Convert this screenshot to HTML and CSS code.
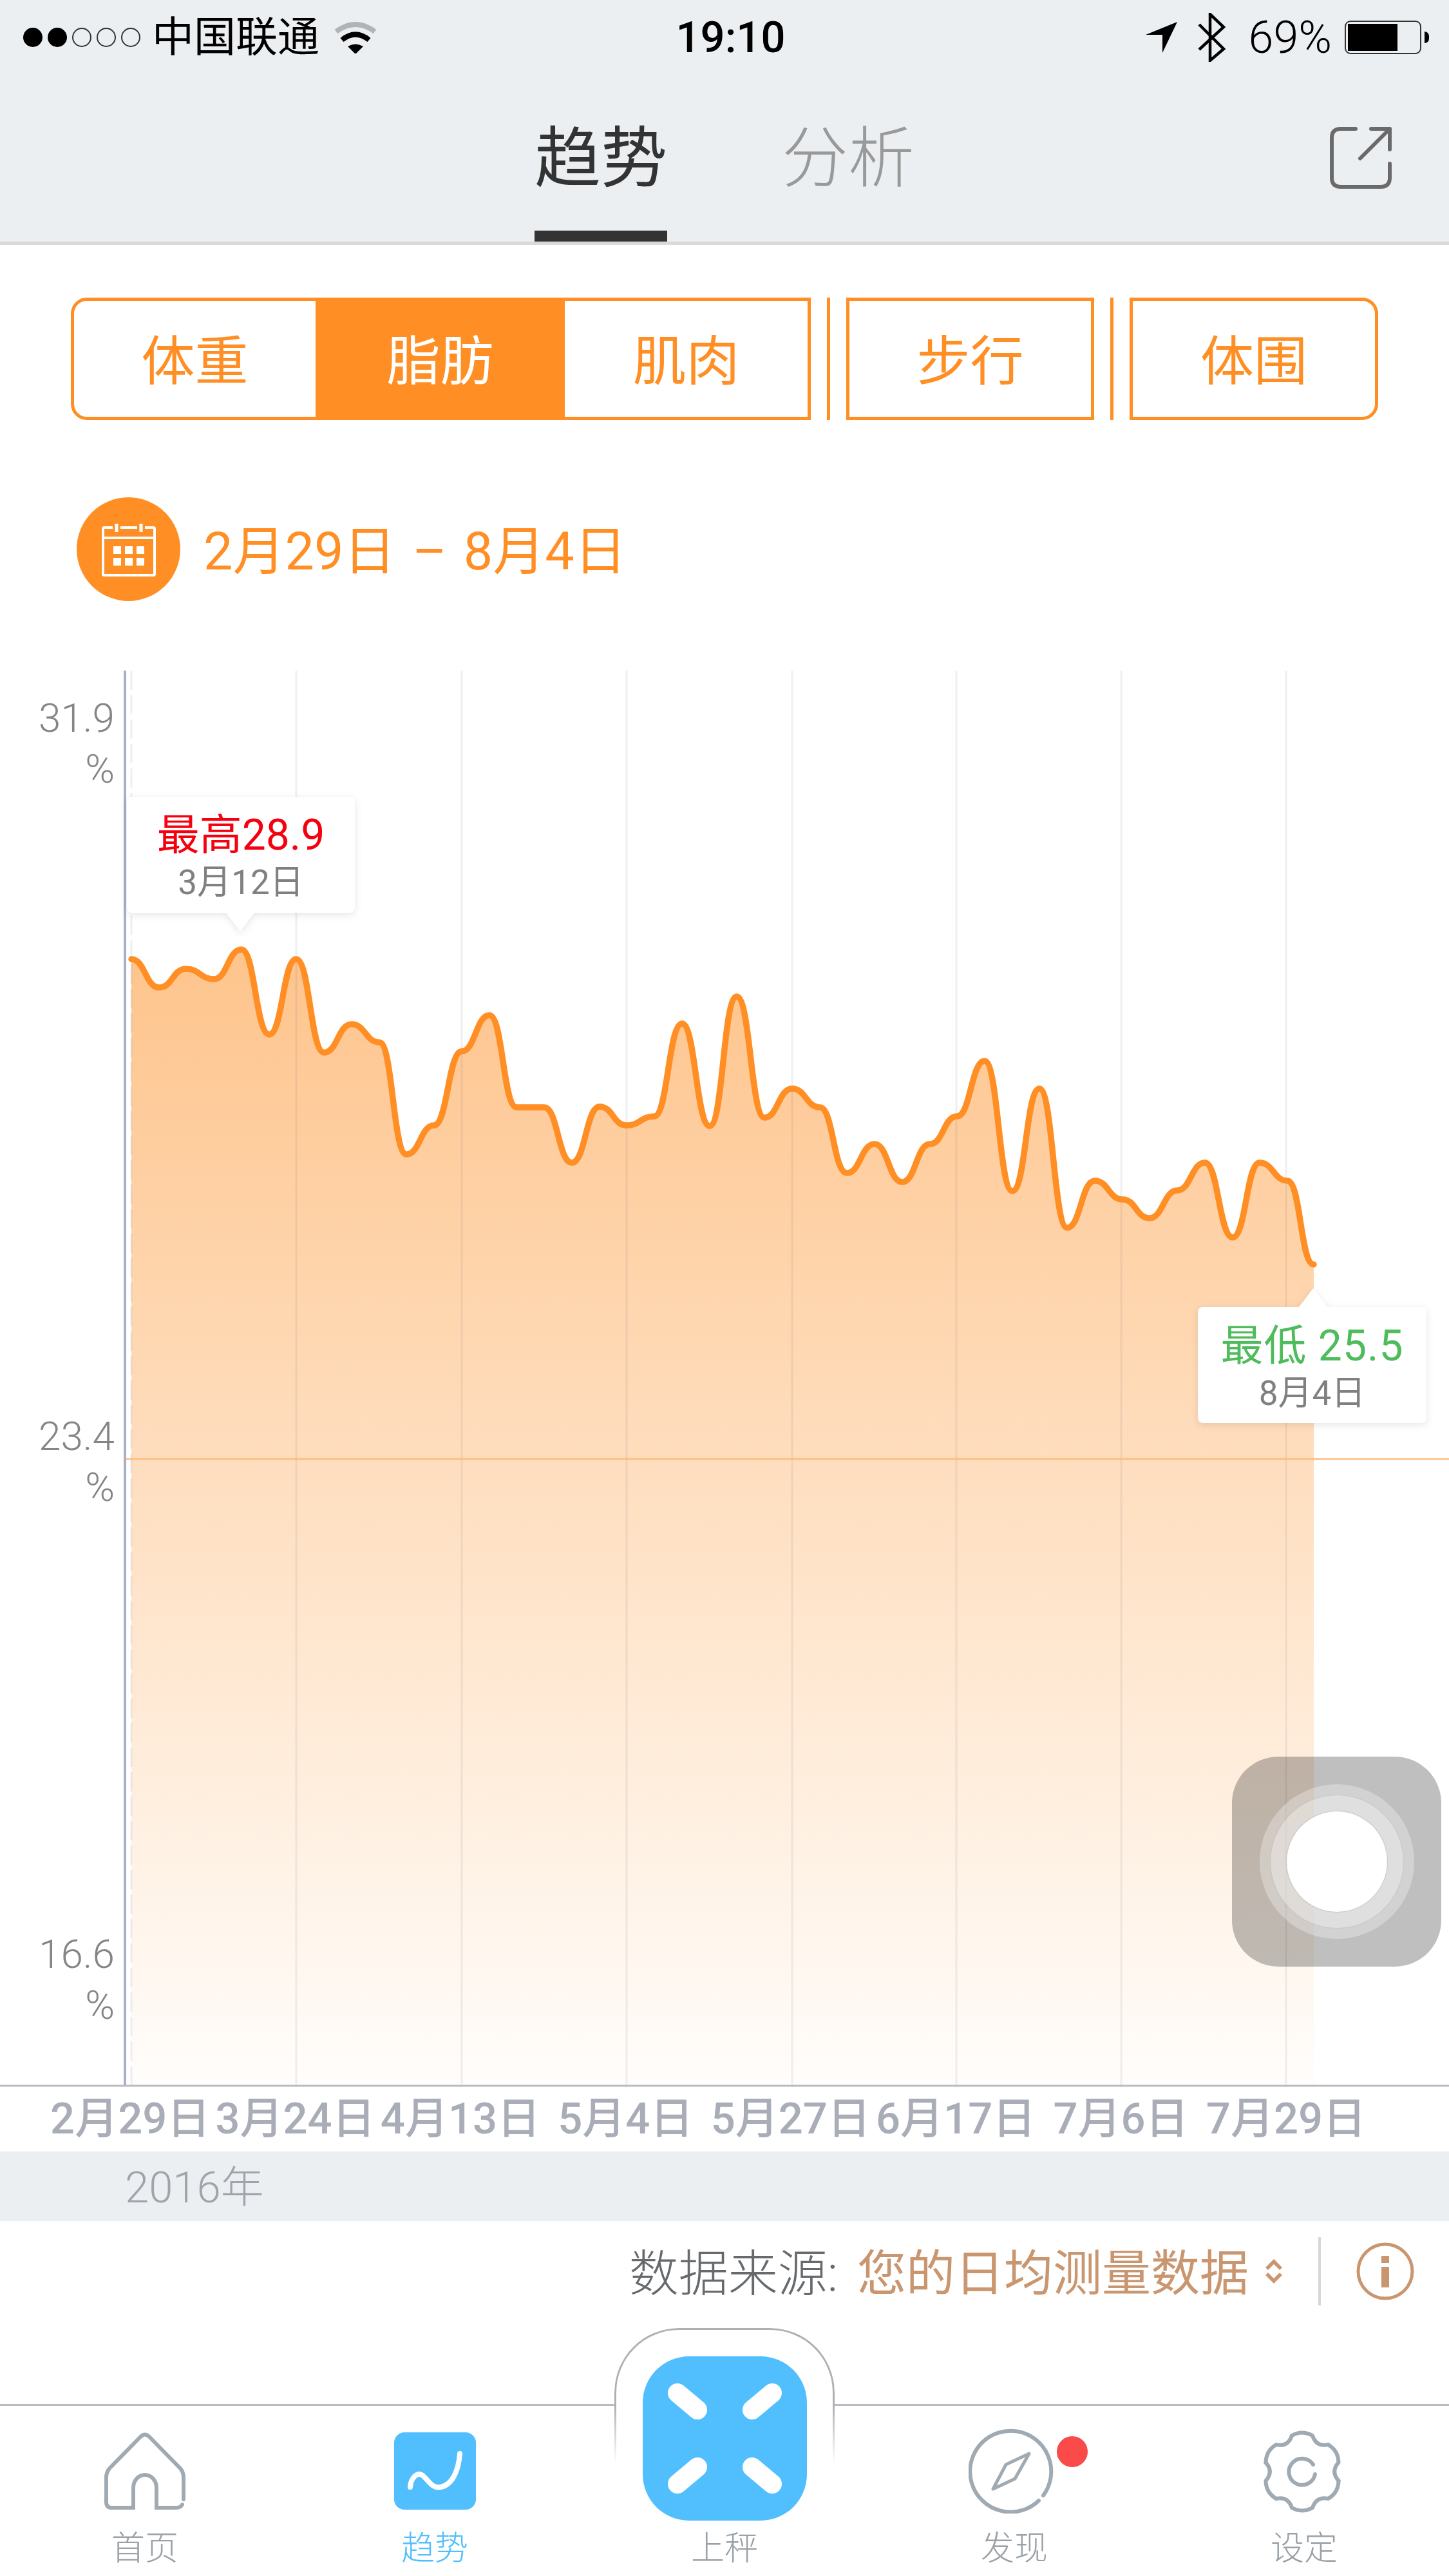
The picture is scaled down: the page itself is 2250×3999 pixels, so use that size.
FILE: index.html
```html
<!DOCTYPE html>
<html lang="zh-CN">
<head>
    <meta charset="UTF-8">
    <meta name="viewport" content="width=device-width, initial-scale=1.0">
    <title>趋势</title>
    <link rel="stylesheet" href="styles.css">
</head>
<body>
<div class="app">
    <header class="top">
        <div class="status">
            <div class="status-left">
                <div class="dots">
                    <span class="dot on"></span><span class="dot on"></span><span class="dot"></span><span class="dot"></span><span class="dot"></span>
                </div>
                <span class="carrier">中国联通</span>
                <svg class="wifi" width="66" height="49" viewBox="0 0 66 49">
                    <path d="M3 15 Q33 -7 63 15" fill="none" stroke="#b1b3b5" stroke-width="8"/>
                    <path d="M12 28 Q33 11 54 28" fill="none" stroke="#000" stroke-width="8"/>
                    <path d="M21 38 Q33 31 45 38 L33 50 Z" fill="#000"/>
                </svg>
            </div>
            <span class="time">19:10</span>
            <div class="status-right">
                <svg class="loc" width="50" height="50" viewBox="0 0 50 50">
                    <path d="M0 21 L49 1 L26 49 L26 21 Z" fill="#000"/>
                </svg>
                <svg class="bt" width="44" height="76" viewBox="0 0 44 76">
                    <path d="M3 18 L41 56 L20 74 V2 L41 22 L3 57" fill="none" stroke="#000" stroke-width="4.5"/>
                </svg>
                <span class="pct">69%</span>
                <div class="battery">
                    <div class="battery-box"><div class="battery-fill"></div></div>
                    <div class="battery-nub"></div>
                </div>
            </div>
        </div>
        <nav class="nav">
            <span></span>
            <div class="tabs">
                <div class="tab active">趋势</div>
                <div class="tab">分析</div>
            </div>
            <svg class="share" width="96" height="96" viewBox="0 0 96 96" fill="none" stroke="#6a6a6a" stroke-width="6" stroke-linecap="round" stroke-linejoin="round">
                <path d="M40 3 H17 Q3 3 3 17 V79 Q3 93 17 93 H79 Q93 93 93 79 V57"/>
                <path d="M64 3 H93 V35"/>
                <path d="M93 3 L47 49"/>
            </svg>
        </nav>
    </header>

    <div class="segments">
        <div class="seg-group">
            <div class="seg seg-a">体重</div>
            <div class="seg seg-b selected">脂肪</div>
            <div class="seg seg-c">肌肉</div>
        </div>
        <i class="seg-sep"></i>
        <div class="seg-box">步行</div>
        <i class="seg-sep"></i>
        <div class="seg-box last">体围</div>
    </div>

    <div class="date-row">
        <div class="cal">
            <svg width="84" height="84" viewBox="0 0 84 84" fill="none" stroke="#fff" stroke-width="4">
                <path d="M17 8 H4 Q2 8 2 10 V80 Q2 82 4 82 H80 Q82 82 82 80 V10 Q82 8 80 8 H67 M29 8 H55"/>
                <path d="M23 2 V15 M61 2 V15" stroke-width="5"/>
                <path d="M2 24 H82"/>
                <g fill="#fff" stroke="none">
                    <rect x="18" y="37" width="12" height="12"/><rect x="36" y="37" width="12" height="12"/><rect x="54" y="37" width="12" height="12"/>
                    <rect x="18" y="55" width="12" height="12"/><rect x="36" y="55" width="12" height="12"/><rect x="54" y="55" width="12" height="12"/>
                </g>
            </svg>
        </div>
        <div class="date-text">2月29日<span class="dash">–</span>8月4日</div>
    </div>

    <section class="chart">
        <svg class="plot" width="2250" height="2199" viewBox="0 1041 2250 2199">
            <defs>
                <linearGradient id="fade" x1="0" y1="0" x2="0" y2="1">
                    <stop offset="0" stop-color="#fec48c"/>
                    <stop offset="1" stop-color="#fffdfb"/>
                </linearGradient>
            </defs>
            <path fill="url(#fade)" d="M204 1489 C225 1489 226 1533 247 1533 S268 1504 289 1504 S311 1520 332 1520 S354 1474 375 1474 S397 1606 418 1606 S439 1489 460 1489 S482 1634 503 1634 S525 1590 546 1590 S568 1618 589 1618 S610 1792 631 1792 S653 1747 674 1747 S696 1632 717 1632 S739 1576 760 1576 S781 1719 802 1719 S824 1719 845 1719 S867 1805 888 1805 S910 1718 931 1718 S952 1747 973 1747 S995 1733 1016 1733 S1038 1589 1059 1589 S1081 1748 1102 1748 S1123 1547 1144 1547 S1166 1735 1187 1735 S1209 1690 1230 1690 S1252 1719 1273 1719 S1294 1821 1315 1821 S1337 1776 1358 1776 S1380 1835 1401 1835 S1423 1776 1444 1776 S1465 1733 1486 1733 S1508 1647 1529 1647 S1551 1849 1572 1849 S1593 1690 1614 1690 S1636 1906 1657 1906 S1679 1833 1700 1833 S1722 1862 1743 1862 S1764 1891 1785 1891 S1807 1848 1828 1848 S1850 1805 1871 1805 S1893 1921 1914 1921 S1935 1805 1956 1805 S1978 1833 1999 1833 S2019 1963 2040 1963 L2040 3237 L204 3237 Z"/>
            <g stroke="#64647a" stroke-opacity="0.1" stroke-width="3">
                <path d="M204 1041 V3237" stroke-dasharray="30 8"/>
                <path d="M460 1041 V3246"/>
                <path d="M717 1041 V3246"/>
                <path d="M973 1041 V3246"/>
                <path d="M1230 1041 V3246"/>
                <path d="M1485 1041 V3246"/>
                <path d="M1741 1041 V3246"/>
                <path d="M1997 1041 V3246"/>
            </g>
            <path d="M194 2265 H2250" stroke="#ffbb7d" stroke-width="2.5"/>
            <path d="M194 1041 V3238" stroke="#a9b0c4" stroke-width="4"/>
            <path d="M0 3238 H2250" stroke="#b9bcc4" stroke-width="3"/>
            <path fill="none" stroke="#ff8f24" stroke-width="9.5" stroke-linecap="round" d="M204 1489 C225 1489 226 1533 247 1533 S268 1504 289 1504 S311 1520 332 1520 S354 1474 375 1474 S397 1606 418 1606 S439 1489 460 1489 S482 1634 503 1634 S525 1590 546 1590 S568 1618 589 1618 S610 1792 631 1792 S653 1747 674 1747 S696 1632 717 1632 S739 1576 760 1576 S781 1719 802 1719 S824 1719 845 1719 S867 1805 888 1805 S910 1718 931 1718 S952 1747 973 1747 S995 1733 1016 1733 S1038 1589 1059 1589 S1081 1748 1102 1748 S1123 1547 1144 1547 S1166 1735 1187 1735 S1209 1690 1230 1690 S1252 1719 1273 1719 S1294 1821 1315 1821 S1337 1776 1358 1776 S1380 1835 1401 1835 S1423 1776 1444 1776 S1465 1733 1486 1733 S1508 1647 1529 1647 S1551 1849 1572 1849 S1593 1690 1614 1690 S1636 1906 1657 1906 S1679 1833 1700 1833 S1722 1862 1743 1862 S1764 1891 1785 1891 S1807 1848 1828 1848 S1850 1805 1871 1805 S1893 1921 1914 1921 S1935 1805 1956 1805 S1978 1833 1999 1833 S2019 1963 2040 1963"/>
        </svg>

        <div class="ylabel y-top">31.9<br>%</div>
        <div class="ylabel y-mid">23.4<br>%</div>
        <div class="ylabel y-low">16.6<br>%</div>

        <div class="callout high">
            <div class="callout-val red">最高28.9</div>
            <div class="callout-date">3月12日</div>
        </div>
        <div class="callout low">
            <div class="callout-val green">最低 25.5</div>
            <div class="callout-date">8月4日</div>
        </div>
    </section>

    <div class="xlabels">
        <span>2月29日</span><span>3月24日</span><span>4月13日</span><span>5月4日</span><span>5月27日</span><span>6月17日</span><span>7月6日</span><span>7月29日</span>
    </div>
    <div class="year">2016年</div>

    <div class="source">
        <span class="source-label">数据来源:</span>
        <span class="source-value">您的日均测量数据</span>
        <svg class="updown" width="30" height="38" viewBox="0 0 30 38" fill="none" stroke="#c9966f" stroke-width="5.5">
            <path d="M4 15 L15 4 L26 15"/>
            <path d="M4 23 L15 34 L26 23"/>
        </svg>
        <i class="source-sep"></i>
        <svg class="info" width="90" height="90" viewBox="0 0 90 90">
            <circle cx="45" cy="45" r="42" fill="none" stroke="#c9966f" stroke-width="5"/>
            <rect x="39" y="21" width="12" height="11" fill="#c9966f"/>
            <rect x="39" y="38" width="12" height="32" fill="#c9966f"/>
        </svg>
    </div>

    <footer class="tabbar">
        <div class="item">
            <svg class="icon" width="128" height="120" viewBox="0 0 128 120" fill="none" stroke="#a0aab2" stroke-width="6" stroke-linecap="round">
                <path d="M124 104 V70 Q124 62 119 56 L71 7 Q64 0 57 7 L9 56 Q4 62 4 70 V108 Q4 117 12 117 H46 V86 A18 20 0 0 1 82 86 V117 H112 Q120 117 122 112"/>
            </svg>
            <span class="item-label">首页</span>
        </div>
        <div class="item current">
            <svg class="icon" width="127" height="120" viewBox="0 0 127 120">
                <rect width="127" height="120" rx="16" fill="#51bffd"/>
                <path d="M25 85 C26 70 36 62 43 66 C52 72 58 88 72 85 C90 82 100 60 102 33" fill="none" stroke="#fff" stroke-width="8" stroke-linecap="round"/>
            </svg>
            <span class="item-label">趋势</span>
        </div>
        <div class="item weigh">
            <div class="notch"></div>
            <svg class="scale" width="255" height="255" viewBox="0 0 255 255">
                <rect width="255" height="255" rx="72" fill="#51bffd"/>
                <g stroke="#fff" stroke-width="30" stroke-linecap="round">
                    <path d="M54 57 L85 83"/>
                    <path d="M201 57 L170 83"/>
                    <path d="M54 198 L85 172"/>
                    <path d="M201 198 L170 172"/>
                </g>
            </svg>
            <span class="icon-space"></span>
            <span class="item-label">上秤</span>
        </div>
        <div class="item">
            <div class="compass-wrap">
                <svg class="icon" width="132" height="132" viewBox="0 0 132 132" fill="none" stroke="#a0aab2" stroke-width="6" stroke-linecap="round" stroke-linejoin="round">
                    <path d="M109 112 A63 63 0 1 1 116 104"/>
                    <path d="M94 39 L72 78 L38 94 L58 56 Z" stroke-width="5"/>
                </svg>
                <span class="badge"></span>
            </div>
            <span class="item-label">发现</span>
        </div>
        <div class="item">
            <svg class="icon gear" width="120" height="128" viewBox="0 0 120 128" fill="none" stroke="#a0aab2" stroke-width="6" stroke-linecap="round">
                <path d="M44 8 Q60 -1 76 8 Q82 26 100.5 22.1"/>
                <path d="M44 8 Q60 -1 76 8 Q82 26 100.5 22.1" transform="rotate(60 60 64)"/>
                <path d="M44 8 Q60 -1 76 8 Q82 26 100.5 22.1" transform="rotate(120 60 64)"/>
                <path d="M44 8 Q60 -1 76 8 Q82 26 100.5 22.1" transform="rotate(180 60 64)"/>
                <path d="M44 8 Q60 -1 76 8 Q82 26 100.5 22.1" transform="rotate(240 60 64)"/>
                <path d="M44 8 Q60 -1 76 8 Q82 26 100.5 22.1" transform="rotate(300 60 64)"/>
                <path d="M80 68 A20.5 20.5 0 1 1 77 53"/>
            </svg>
            <span class="item-label">设定</span>
        </div>
    </footer>

    <div class="assist">
        <div class="ring-a"><div class="ring-b"><div class="ring-c"></div></div></div>
    </div>
</div>
</body>
</html>
```

FILE: styles.css
```css
body{
    margin: 0;
    background: #fff;
    font-family: Roboto, "Noto Sans CJK SC", sans-serif;
}
.app{
    position: relative;
    width: 2250px;
    height: 3999px;
    overflow: hidden;
    display: flex;
    flex-direction: column;
}

/* header */
.top{
    background: #eceff2;
    border-bottom: 5px solid #d8d9db;
}
.status{
    height: 130px;
    display: grid;
    grid-template-columns: 1fr auto 1fr;
    align-items: center;
    padding: 0 31px 14px 36px;
    box-sizing: border-box;
    color: #000;
}
.status-left, .status-right{
    display: flex;
    align-items: center;
}
.status-right{
    justify-content: flex-end;
}
.dots{
    display: flex;
    gap: 8px;
}
.dot{
    width: 30px;
    height: 30px;
    border-radius: 50%;
    border: 2px solid #333;
    box-sizing: border-box;
}
.dot.on{
    background: #000;
    border-color: #000;
}
.carrier{
    font-size: 65px;
    margin-left: 18px;
    line-height: 76px;
}
.wifi{
    margin-left: 23px;
}
.time{
    font-size: 67px;
    font-weight: 500;
    margin-left: 14px;
}
.loc{
    margin-right: 30px;
}
.bt{
    margin-right: 36px;
}
.pct{
    font-size: 70px;
    font-weight: 300;
    margin-right: 20px;
}
.battery{
    display: flex;
    align-items: center;
    gap: 5px;
}
.battery-box{
    width: 119px;
    height: 52px;
    border: 2px solid #333;
    border-radius: 9px;
    padding: 3px;
    box-sizing: border-box;
}
.battery-fill{
    width: 77px;
    height: 100%;
    background: #000;
}
.battery-nub{
    width: 7px;
    height: 18px;
    background: #000;
    border-radius: 0 9px 9px 0;
}
.nav{
    height: 245px;
    display: grid;
    grid-template-columns: 1fr auto 1fr;
}
.tabs{
    display: flex;
    gap: 178px;
}
.tab{
    width: 206px;
    height: 245px;
    box-sizing: border-box;
    padding-top: 49px;
    text-align: center;
    font-size: 103px;
    line-height: 136px;
    font-weight: 300;
    color: #999;
}
.tab.active{
    color: #333;
    font-weight: 400;
    border-bottom: 17px solid #333;
}
.share{
    justify-self: end;
    margin: 67px 89px 0 0;
}

/* segmented buttons */
.segments{
    display: flex;
    gap: 25px;
    margin: 82px 0 0 110px;
    height: 190px;
    color: #ff8f24;
    font-size: 83px;
    font-weight: 400;
}
.seg-group{
    display: flex;
    width: 1149px;
    box-sizing: border-box;
    border: 5px solid #ff8f24;
    border-radius: 25px 0 0 25px;
    overflow: hidden;
}
.seg, .seg-box{
    display: flex;
    align-items: center;
    justify-content: center;
    box-sizing: border-box;
    padding-bottom: 6px;
}
.seg-a{
    width: 375px;
}
.seg-b{
    width: 387px;
}
.seg-c{
    width: 377px;
}
.selected{
    background: #ff8f24;
    color: #fff;
}
.seg-sep{
    width: 5px;
    background: #ff8f24;
}
.seg-box{
    width: 385px;
    border: 5px solid #ff8f24;
}
.seg-box.last{
    width: 386px;
    border-radius: 0 25px 25px 0;
}

/* date */
.date-row{
    display: flex;
    align-items: center;
    gap: 36px;
    margin: 120px 0 0 119px;
    height: 161px;
}
.cal{
    width: 161px;
    height: 161px;
    border-radius: 50%;
    background: #ff8f24;
    display: flex;
    align-items: center;
    justify-content: center;
}
.date-text{
    color: #ff8f24;
    font-size: 81px;
    font-weight: 400;
    margin-bottom: 8px;
}
.dash{
    margin: 0 26px;
}

/* chart */
.chart{
    position: relative;
    margin-top: 108px;
    height: 2199px;
}
.plot{
    display: block;
}
.ylabel{
    position: absolute;
    left: 0;
    width: 178px;
    text-align: right;
    font-size: 62px;
    font-weight: 300;
    line-height: 79px;
    color: #858585;
}
.y-top{
    top: 34px;
}
.y-mid{
    top: 1149px;
}
.y-low{
    top: 1953px;
}
.callout{
    position: absolute;
    box-sizing: border-box;
    background: #fff;
    border-radius: 8px;
    filter: drop-shadow(0 3px 6px rgba(0, 0, 0, 0.1));
    text-align: center;
}
.callout::after{
    content: "";
    position: absolute;
    width: 0;
    height: 0;
    border-left: 22px solid transparent;
    border-right: 22px solid transparent;
}
.high{
    left: 197px;
    top: 196px;
    width: 354px;
    height: 180px;
    padding-top: 18px;
}
.high::after{
    left: 154px;
    bottom: -29px;
    border-top: 29px solid #fff;
}
.low{
    left: 1860px;
    top: 988px;
    width: 355px;
    height: 180px;
    padding-top: 19px;
}
.low::after{
    left: 157px;
    top: -29px;
    border-bottom: 29px solid #fff;
}
.callout-val{
    font-size: 66px;
    line-height: 84px;
}
.callout-date{
    font-size: 53px;
    line-height: 62px;
    color: #808080;
}
.red{
    color: #f5000f;
}
.green{
    color: #4fbc5c;
    letter-spacing: 1px;
}

/* axis */
.xlabels{
    display: grid;
    grid-template-columns: repeat(8, 256.4px);
    padding-left: 74px;
    height: 100px;
    font-size: 67px;
    font-weight: 500;
    line-height: 98px;
    color: #a9adb8;
    text-align: center;
    white-space: nowrap;
}
.year{
    height: 108px;
    background: #ebeff2;
    padding-left: 194px;
    font-size: 67px;
    font-weight: 300;
    line-height: 112px;
    color: #9fa4ac;
}

/* data source */
.source{
    display: flex;
    align-items: center;
    justify-content: flex-end;
    height: 156px;
    padding-right: 54px;
    font-size: 77px;
    font-weight: 300;
}
.source-label{
    color: #666a6d;
    margin-bottom: 6px;
}
.source-value{
    color: #c9966f;
    margin-left: 30px;
    margin-bottom: 6px;
    font-size: 76px;
    font-weight: 400;
}
.updown{
    margin-left: 24px;
}
.source-sep{
    width: 4px;
    height: 106px;
    background: #d5d7da;
    margin: 0 55px 0 54px;
}

/* tab bar */
.tabbar{
    margin-top: auto;
    height: 267px;
    box-sizing: border-box;
    border-top: 3px solid #b8bcc0;
    display: grid;
    grid-template-columns: repeat(5, 450px);
}
.item{
    display: flex;
    flex-direction: column;
    align-items: center;
    position: relative;
    height: 264px;
}
.icon{
    display: block;
}
.icon-space, .item > .icon, .compass-wrap{
    height: 132px;
    margin-top: 35px;
    overflow: visible;
}
.item > .icon{
    height: 120px;
    margin-top: 41px;
    margin-bottom: 6px;
}
.compass-wrap{
    position: relative;
    margin-right: 10px;
}
.item > .gear{
    height: 128px;
    margin-top: 38px;
    margin-bottom: 1px;
    margin-right: 6px;
}
.item-label{
    font-size: 52px;
    font-weight: 300;
    line-height: 60px;
    margin-top: 25px;
    color: #9aa2a8;
}
.current .item-label{
    color: #51bffd;
}
.badge{
    position: absolute;
    left: 137px;
    top: 12px;
    width: 48px;
    height: 48px;
    border-radius: 50%;
    background: #fa4a4a;
}
.notch{
    position: absolute;
    left: 54px;
    top: -121px;
    width: 342px;
    height: 210px;
    box-sizing: border-box;
    background: #fff;
    border: 3px solid #aeb0b3;
    border-bottom: 0;
    border-radius: 100px 100px 0 0;
    -webkit-mask-image: linear-gradient(#000 58%, transparent 100%);
    mask-image: linear-gradient(#000 58%, transparent 100%);
}
.scale{
    position: absolute;
    left: 98px;
    top: -77px;
}

/* floating touch button */
.assist{
    position: absolute;
    left: 1913px;
    top: 2727px;
    width: 325px;
    height: 326px;
    border-radius: 72px;
    background: rgba(0, 0, 0, 0.25);
    display: flex;
    align-items: center;
    justify-content: center;
}
.ring-a, .ring-b{
    border-radius: 50%;
    background: rgba(255, 255, 255, 0.3);
    display: flex;
    align-items: center;
    justify-content: center;
}
.ring-a{
    width: 240px;
    height: 240px;
}
.ring-b{
    width: 206px;
    height: 206px;
    box-shadow: 0 0 2px rgba(0, 0, 0, 0.15);
}
.ring-c{
    width: 156px;
    height: 156px;
    border-radius: 50%;
    background: #fff;
    box-shadow: 0 0 2px rgba(0, 0, 0, 0.3);
}
```
